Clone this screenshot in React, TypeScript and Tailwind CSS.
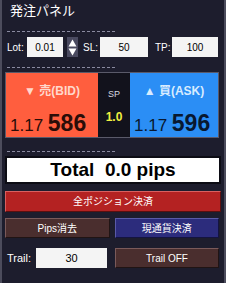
import React from "react"

const font = { fontFamily: '"Liberation Sans", "Noto Sans CJK JP", sans-serif' }

const Dash = ({ mt }: { mt: string }) => (
    <div className={`${mt} ml-[2px] w-[108px] border-t border-dashed border-[#8a8aa0]`} />
)

export default function App() {
    return (
        <div
            style={font}
            className="w-[226px] h-[283px] bg-[#1d1d2d] border-x-2 border-[#4c4c5c] px-[3px] text-white overflow-hidden"
        >
            <div className="pt-[3px] pl-[5px] text-[13px] leading-[16px]">発注パネル</div>

            <div className="mt-[12px] ml-[2px] w-[108px] border-t border-dashed border-[#8a8aa0]" />

            <div className="mt-[5px] flex items-center h-[20px] text-[10px]">
                <span className="ml-[2px] w-[20px]">Lot:</span>
                <div className="w-[36px] h-[20px] bg-[#f4f4f4] text-black flex items-center justify-center">0.01</div>
                <div className="ml-[4px] w-[11px] h-[20px] bg-[#4a4a60] flex flex-col items-center justify-center gap-[1px]">
                    <svg width="9" height="8" viewBox="0 0 9 8"><path d="M4.5 0.5 L8.5 7.5 L0.5 7.5 Z" fill="#ffffff" /></svg>
                    <svg width="9" height="8" viewBox="0 0 9 8"><path d="M0.5 0.5 L8.5 0.5 L4.5 7.5 Z" fill="#ffffff" /></svg>
                </div>
                <span className="ml-[5px] w-[17px] whitespace-nowrap">SL:</span>
                <div className="w-[48px] h-[20px] bg-[#f4f4f4] text-black flex items-center justify-center">50</div>
                <span className="ml-[7px] w-[17px] whitespace-nowrap">TP:</span>
                <div className="w-[46px] h-[20px] bg-[#f4f4f4] text-black flex items-center justify-center">100</div>
            </div>

            <Dash mt="mt-[10px]" />

            <div className="mt-[4px] flex h-[66px] border border-[#5a5a6a] mr-[2px]">
                <div className="w-[92px] bg-[#ff5e3e] flex flex-col">
                    <div className="mt-[9px] text-center text-[12px] font-bold text-[#ffd8cc]">▼ 売(BID)</div>
                    <div className="mt-auto mb-[2px] pl-[4px] text-[#2a0d08] leading-none whitespace-nowrap">
                        <span className="text-[17px]">1.17 </span>
                        <span className="text-[23px] font-bold">586</span>
                    </div>
                </div>
                <div className="w-[32px] bg-[#12121c] flex flex-col items-center">
                    <div className="mt-[15px] text-[9px] text-[#d8d8e0]">SP</div>
                    <div className="mt-[6px] text-[12px] font-bold text-[#f0f040]">1.0</div>
                </div>
                <div className="flex-1 bg-[#2b8ef5] flex flex-col">
                    <div className="mt-[9px] text-center text-[12px] font-bold text-[#d8ecff]">▲ 買(ASK)</div>
                    <div className="mt-auto mb-[2px] pl-[4px] text-[#081830] leading-none whitespace-nowrap">
                        <span className="text-[17px]">1.17 </span>
                        <span className="text-[23px] font-bold">596</span>
                    </div>
                </div>
            </div>

            <Dash mt="mt-[13px]" />

            <div className="mt-[4px] h-[28px] bg-white border-2 border-[#0c0c14] text-black flex items-center justify-center text-[19px] font-bold whitespace-pre">
                Total  0.0 pips
            </div>

            <button className="mt-[7px] w-full h-[21px] bg-[#b42222] border border-t-[#d86060] border-l-[#d86060] border-b-[#5a1010] border-r-[#5a1010] text-[10px] text-white">
                全ポジション決済
            </button>

            <div className="mt-[6px] flex gap-[5px] h-[20px]">
                <button className="flex-1 bg-[#4a2e2e] border border-t-[#7a5a5a] border-l-[#7a5a5a] border-b-[#201414] border-r-[#201414] text-[10px] text-white">
                    Pips消去
                </button>
                <button className="flex-1 mr-[2px] bg-[#2c2c7c] border border-t-[#5a5aa8] border-l-[#5a5aa8] border-b-[#141440] border-r-[#141440] text-[10px] text-white">
                    現通貨決済
                </button>
            </div>

            <div className="mt-[10px] flex items-center h-[20px]">
                <span className="ml-[2px] w-[29px] text-[11px]">Trail:</span>
                <div className="w-[71px] h-[20px] bg-[#f4f4f4] text-black text-[11px] flex items-center justify-center">30</div>
                <button className="ml-[8px] flex-1 mr-[2px] h-[20px] bg-[#4a2e2e] border border-t-[#7a5a5a] border-l-[#7a5a5a] border-b-[#201414] border-r-[#201414] text-[10px] text-white">
                    Trail OFF
                </button>
            </div>
        </div>
    )
}
